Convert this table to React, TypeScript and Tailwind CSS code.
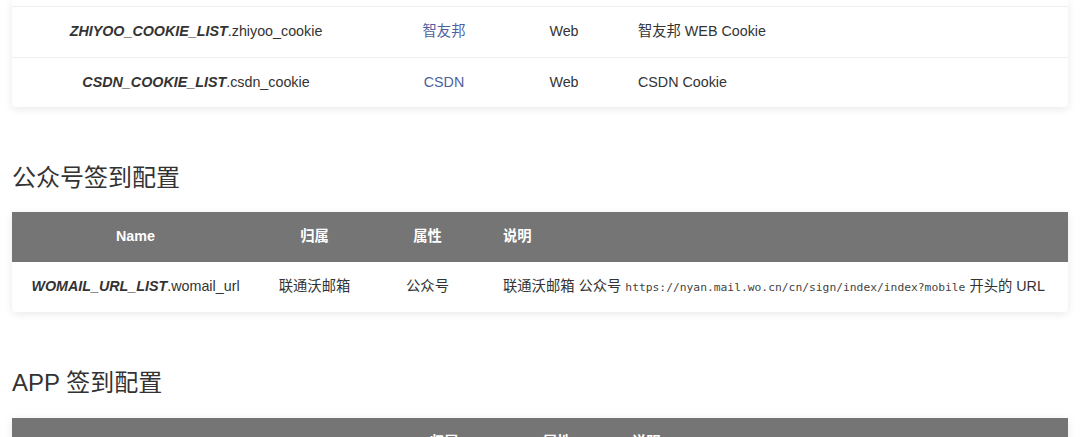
import type { ReactNode } from 'react'

type Row = { key: string; field: string; owner: ReactNode; kind: string; desc: ReactNode }

const FONT = { fontFamily: '"Liberation Sans", "Noto Sans CJK SC", sans-serif' }

function NameCell({ k, f }: { k: string; f: string }) {
  return (
    <span>
      <b className="italic font-bold">{k}</b>.{f}
    </span>
  )
}

function Table({ cols, rows, header = true, topStub = false }: { cols: string; rows: Row[]; header?: boolean; topStub?: boolean }) {
  return (
    <div className="bg-white rounded-b shadow-[0_2px_8px_rgba(0,0,0,0.09)] text-[14.3px] text-[#333]">
      {topStub && <div className="h-[7px] border-b border-[#efefef]" />}
      {header && (
        <div className={`grid ${cols} h-[50px] items-center bg-[#757575] text-white font-bold`}>
          <div className="text-center px-[18px]">Name</div>
          <div className="text-center px-[18px]">归属</div>
          <div className="text-center px-[18px]">属性</div>
          <div className="px-[18px]">说明</div>
        </div>
      )}
      {rows.map((r, i) => (
        <div key={r.key} className={`grid ${cols} h-[50px] items-center ${i > 0 ? 'border-t border-[#efefef]' : ''}`}>
          <div className="text-center px-[18px] whitespace-nowrap"><NameCell k={r.key} f={r.field} /></div>
          <div className="text-center px-[18px] whitespace-nowrap">{r.owner}</div>
          <div className="text-center px-[18px]">{r.kind}</div>
          <div className="px-[18px] whitespace-nowrap">{r.desc}</div>
        </div>
      ))}
    </div>
  )
}

const cookieRows: Row[] = [
  { key: 'ZHIYOO_COOKIE_LIST', field: 'zhiyoo_cookie', owner: <span className="text-[#4f5fa0]">智友邦</span>, kind: 'Web', desc: '智友邦 WEB Cookie' },
  { key: 'CSDN_COOKIE_LIST', field: 'csdn_cookie', owner: <span className="text-[#4f5fa0]">CSDN</span>, kind: 'Web', desc: 'CSDN Cookie' },
]

const mpRows: Row[] = [
  {
    key: 'WOMAIL_URL_LIST',
    field: 'womail_url',
    owner: '联通沃邮箱',
    kind: '公众号',
    desc: (
      <>
        联通沃邮箱 公众号{' '}
        <code className="text-[11.3px] text-[#444]" style={{ fontFamily: '"DejaVu Sans Mono", "Liberation Mono", monospace' }}>
          https://nyan.mail.wo.cn/cn/sign/index/index?mobile
        </code>{' '}
        开头的 URL
      </>
    ),
  },
]

export default function App() {
  return (
    <div className="bg-white h-[437px] overflow-hidden px-3" style={FONT}>
      <Table cols="grid-cols-[368px_128px_112px_1fr]" rows={cookieRows} header={false} topStub />

      <h2 className="mt-[55px] mb-[18px] text-[24px] leading-[32px] text-[#333] font-normal">公众号签到配置</h2>
      <Table cols="grid-cols-[247px_111px_115px_1fr]" rows={mpRows} />

      <h2 className="mt-[55px] mb-[19px] text-[24px] leading-[32px] text-[#333] font-normal">APP 签到配置</h2>
      <Table cols="grid-cols-[376px_112px_114px_1fr]" rows={[]} />
    </div>
  )
}
